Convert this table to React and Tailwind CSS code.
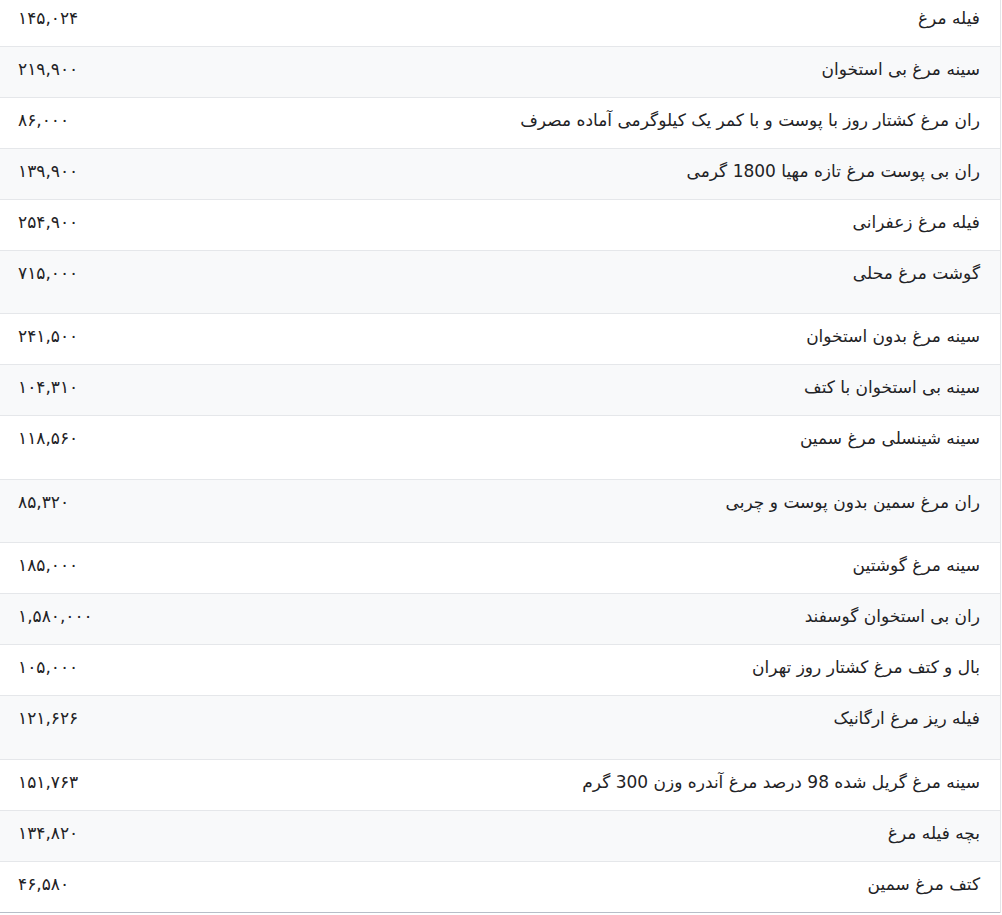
import React from "react";

const rows = [
  ["فیله مرغ", "۱۴۵,۰۲۴", false],
  ["سینه مرغ بی استخوان", "۲۱۹,۹۰۰", false],
  ["ران مرغ کشتار روز با پوست و با کمر یک کیلوگرمی آماده مصرف", "۸۶,۰۰۰", false],
  ["ران بی پوست مرغ تازه مهیا 1800 گرمی", "۱۳۹,۹۰۰", false],
  ["فیله مرغ زعفرانی", "۲۵۴,۹۰۰", false],
  ["گوشت مرغ محلی", "۷۱۵,۰۰۰", "h-[63px]"],
  ["سینه مرغ بدون استخوان", "۲۴۱,۵۰۰", false],
  ["سینه بی استخوان با کتف", "۱۰۴,۳۱۰", false],
  ["سینه شینسلی مرغ سمین", "۱۱۸,۵۶۰", "h-[64px]"],
  ["ران مرغ سمین بدون پوست و چربی", "۸۵,۳۲۰", "h-[63px]"],
  ["سینه مرغ گوشتین", "۱۸۵,۰۰۰", false],
  ["ران بی استخوان گوسفند", "۱,۵۸۰,۰۰۰", false],
  ["بال و کتف مرغ کشتار روز تهران", "۱۰۵,۰۰۰", false],
  ["فیله ریز مرغ ارگانیک", "۱۲۱,۶۲۶", "h-[64px]"],
  ["سینه مرغ گریل شده 98 درصد مرغ آندره وزن 300 گرم", "۱۵۱,۷۶۳", false],
  ["بچه فیله مرغ", "۱۳۴,۸۲۰", false],
  ["کتف مرغ سمین", "۴۶,۵۸۰", false],
];

export default function App() {
  return (
    <div className="w-[1002px] h-[915px] overflow-hidden bg-white">
      <div
        dir="rtl"
        className="mt-[-4px] w-[1001px] border-r border-[#e3e5e8] text-[17px] leading-6 text-[#1f2326]"
        style={{ fontFamily: "'DejaVu Sans', 'Noto Sans Arabic', sans-serif" }}
      >
        {rows.map(([name, price, tall], i) => {
          const last = i === rows.length - 1;
          return (
            <div
              key={i}
              className={
                "flex items-start justify-between pt-[10px] " +
                (tall === "h-[63px]" ? "h-[63px] " : tall === "h-[64px]" ? "h-[64px] " : "h-[51px] ") +
                (i % 2 === 1 ? "bg-[#f8f9fa] " : "bg-white ") +
                (last ? "border-b border-[#b7bec8]" : "border-b border-[#e5e7ea]")
              }
            >
              <div className="pr-5 whitespace-nowrap">{name}</div>
              <div className="pl-[18px] whitespace-nowrap">{price}</div>
            </div>
          );
        })}
      </div>
    </div>
  );
}
